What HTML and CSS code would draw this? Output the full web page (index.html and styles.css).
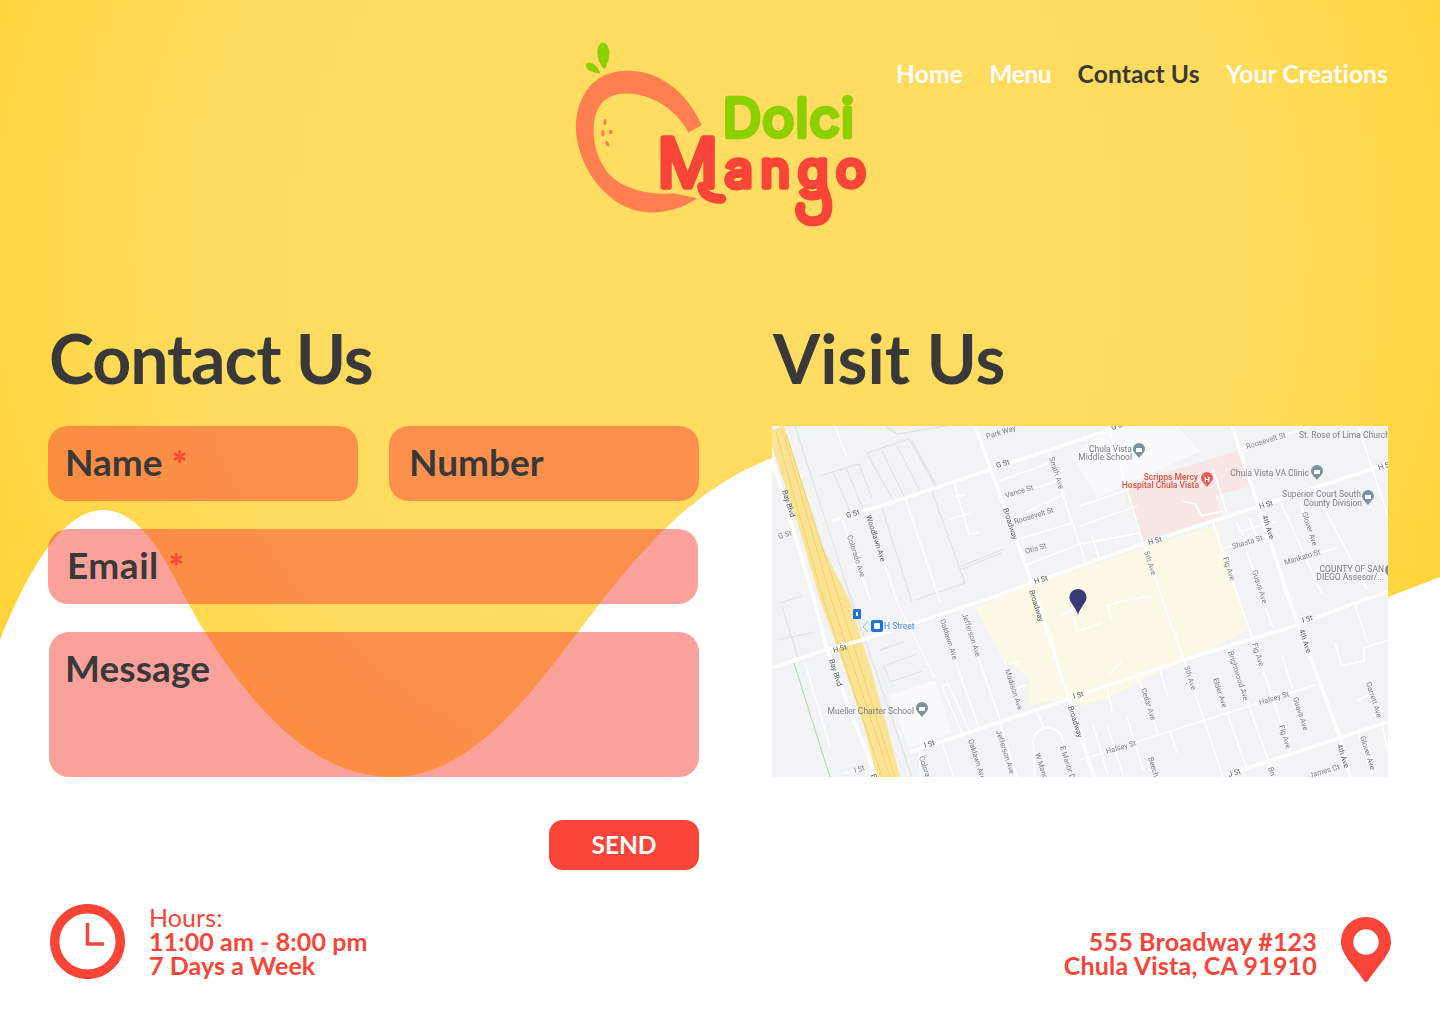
FILE: index.html
```html
<!DOCTYPE html>
<html lang="en">
<head>
<meta charset="utf-8">
<title>Dolci Mango - Contact Us</title>
<link rel="stylesheet" href="styles.css">
</head>
<body>
<svg class="backdrop" viewBox="0 0 1440 1024" aria-hidden="true">
  <defs>
    <radialGradient id="sun" gradientUnits="userSpaceOnUse" cx="720" cy="250" r="860">
      <stop offset="0" stop-color="#FFDD63"/>
      <stop offset="0.62" stop-color="#FFDC5E"/>
      <stop offset="1" stop-color="#FFD230"/>
    </radialGradient>
  </defs>
  <path fill="url(#sun)" d="M0,640 C30,565 65,510 103,510 C150,510 175,585 205,632 C260,720 320,777 393,777 C470,777 530,695 578,632 C640,550 690,490 772,458 C900,408 1000,560 1388,597 L1440,577 V0 H0 Z"/>
</svg>

<div class="page">
  <header class="header">
    <svg class="logo" viewBox="0 0 960 630" role="img" aria-label="Dolci Mango">
      <path class="logo-leaf" d="M112,68 C112,45 125,36 133,38 C145,42 152,65 146,88 C143,100 138,112 133,118 C122,105 112,88 112,68 Z"/>
      <path class="logo-leaf" d="M78,103 C84,95 97,98 106,106 C114,113 119,124 121,131 C108,130 95,127 86,120 C80,115 76,108 78,103 Z"/>
      <path class="logo-ring" d="M425,285 C395,215 330,140 240,125 C190,118 145,125 110,150 C70,178 45,240 48,300 C52,380 100,470 170,515 C230,555 320,565 412,505 L340,490 C280,495 210,485 160,445 C120,410 95,345 102,280 C106,240 125,205 165,195 C220,180 290,205 330,240 C355,262 375,285 385,308 Z"/>
      <ellipse class="logo-seed" cx="135" cy="276" rx="4.5" ry="9"/>
      <ellipse class="logo-seed" cx="129" cy="310" rx="5" ry="10"/>
      <ellipse class="logo-seed" cx="152" cy="306" rx="6" ry="7"/>
      <ellipse class="logo-seed" cx="142" cy="341" rx="5" ry="9" transform="rotate(-25 142 341)"/>
      <text class="logo-dolci" x="488" y="320" textLength="394" lengthAdjust="spacing">Dolci</text>
      <path class="logo-tail" d="M426,470 C430,495 455,508 484,506"/>
      <path class="logo-tail" d="M786,470 C815,530 805,572 762,574 C725,575 715,548 722,530"/>
      <text class="logo-mango" x="292" y="470"><tspan class="logo-m">M</tspan><tspan class="logo-ango" dx="20">ango</tspan></text>
    </svg>
    <nav class="nav">
      <a href="#">Home</a>
      <a href="#">Menu</a>
      <a href="#" class="is-current">Contact Us</a>
      <a href="#">Your Creations</a>
    </nav>
  </header>

  <main class="main">
    <section class="contact">
      <h1>Contact Us</h1>
      <form class="form">
        <div class="field field-name">Name <span class="req">*</span></div>
        <div class="field field-number">Number</div>
        <div class="field field-email">Email <span class="req">*</span></div>
        <div class="field field-message">Message</div>
        <button type="button" class="send">SEND</button>
      </form>
    </section>
    <section class="visit">
      <h1>Visit Us</h1>
      <svg class="map" viewBox="0 0 616 351" role="img" aria-label="Map of Chula Vista">
        <defs>
          <symbol id="poi" viewBox="0 0 12 15">
            <path d="M6,0 A6,6 0 0 1 12,6 C12,9.5 8,12 6,15 C4,12 0,9.5 0,6 A6,6 0 0 1 6,0 Z"/>
          </symbol>
        </defs>
        <rect class="m-bg" width="616" height="351"/>
        <polygon class="m-white" points="338,0 405,0 428,25 351,60 325,72 300,30"/>
        <polygon class="m-white" points="117,269 163,254 180,307 137,322"/>
        <polygon class="m-pink" points="351,60 465,25 478,60 443,70 450,90 371,115"/>
        <polygon class="m-cream" points="203,181 255,160 308,143 371,122 430,103 446,100 476,205 388,246 335,272 308,280 293,272 257,280 257,251 230,231"/>

        <g class="m-grey">
          <path d="M23,0 L80,176 L140,351"/>
          <path d="M8,0 L14,20"/>
          <path d="M48,50 L87,38 L100,72 M62,48 L80,90 M75,44 L93,88"/>
          <path d="M95,27 L137,13 L165,63 L122,76 Z M110,25 L132,70 M125,20 L148,65 M140,15 L165,60"/>
          <path d="M110,82 L140,176"/>
          <path d="M160,65 L193,157 L143,174"/>
          <path d="M190,140 L232,123 M190,143 L230,127"/>
          <path d="M5,214 L43,206"/>
          <path d="M8,177 L30,170 M10,180 L26,232"/>
          <path d="M108,224 L132,216 M112,240 L145,228 M118,256 L150,245 M112,240 L118,256"/>
          <path d="M113,0 L125,8 L175,0"/>
        </g>

        <polygon class="m-yellow" points="0,4 12,0 17,15 50,120 78,175 98,240 115,300 128,351 115,351 105,351 92,300 70,235 48,174 28,105 0,20"/>
        <g class="m-yellow-line">
          <path d="M4,6 L52,176 L110,351"/>
          <path d="M10,3 L60,176 L118,351"/>
          <path d="M14,8 L68,176 L123,351"/>
        </g>
        <path class="m-green" d="M22,237 L58,351"/>

        <g class="m-minor">
          <path d="M63,0 L74,30"/>
          <path d="M70,93 L98,174"/>
          <path d="M97,90 L125,176 L163,252"/>
          <path d="M133,72 L168,176"/>
          <path d="M182,57 L197,108 L206,107 M183,70 L193,69 M177,93 L200,87"/>
          <path d="M227,55 L277,37 M233,73 L290,53 M240,93 L293,68 M247,113 L300,97 M252,140 L310,117"/>
          <path d="M277,27 L315,140"/>
          <path d="M308,80 L358,63 M308,100 L365,80 M308,118 L368,107"/>
          <path d="M336,0 L371,117 L421,261 L451,351"/>
          <path d="M441,43 L455,87"/>
          <path d="M411,75 L423,78 L430,90 L451,85"/>
          <path d="M441,97 L468,176 L518,324"/>
          <path d="M450,123 L495,110"/>
          <path d="M473,120 L501,202 M510,229 L521,264"/>
          <path d="M508,75 L550,168"/>
          <path d="M528,75 L541,120"/>
          <path d="M511,137 L565,122"/>
          <path d="M551,80 L595,163"/>
          <path d="M586,0 L616,90"/>
          <path d="M471,22 L541,0"/>
          <path d="M465,97 L475,118 M477,92 L485,112 M470,105 L505,95"/>
          <path d="M455,287 L475,344"/>
          <path d="M456,221 L496,334 L505,351"/>
          <path d="M308,334 L543,259"/>
          <path d="M366,251 L386,307 M398,306 L405,327"/>
          <path d="M388,244 L396,271"/>
          <path d="M335,262 L340,286"/>
          <path d="M321,299 L336,349 M335,299 L351,349 M355,291 L371,344"/>
          <path d="M563,217 L570,240 L592,235 L592,222 L616,214"/>
          <path d="M583,179 L596,217"/>
          <path d="M586,307 L601,351"/>
          <path d="M586,274 L605,265"/>
          <path d="M610,300 L616,325"/>
          <path d="M168,191 L207,302 M190,184 L228,294"/>
          <path d="M170,261 L190,307 M177,259 L197,305 M170,261 Q172,258 177,259"/>
          <path d="M170,317 L182,351 M227,294 L245,351"/>
          <path d="M232,234 L250,286 M233,239 L248,235 M245,262 L255,259"/>
          <path d="M265,286 L272,302 M263,351 L261,315 Q262,304 275,302 Q285,302 290,310 L297,340"/>
          <path d="M33,237 L58,321"/>
          <path d="M73,347 L93,342"/>
          <path d="M147,324 L149,351"/>
          <path d="M538,349 L565,342"/>
          <path d="M336,249 L350,235 M320,110 L327,132"/>
          <path d="M288,190 L300,184 L305,205 L330,197 M340,195 L336,180 L350,175"/>
          <path d="M350,175 L380,170"/>
        </g>

        <g class="m-major">
          <path d="M60,95 L133,72 L220,43 L310,13 L350,0"/>
          <path d="M0,242 L53,224 L90,214 L213,174 L260,157 L371,118 L441,95 L488,80 L618,37"/>
          <path d="M138,326 L300,272 L411,234 L525,199 L591,174 L616,166"/>
          <path d="M455,349 L616,296"/>
          <path d="M203,0 L260,157 L322,351"/>
          <path d="M460,0 L518,176 L568,311 L578,351"/>
          <path d="M0,33 L43,176 L55,224 L100,341 L104,351"/>
        </g>

        <g class="m-label">
          <text transform="translate(215,13) rotate(-17)">Park Way</text>
          <text class="dark" transform="translate(225,42) rotate(-17)">G St</text>
          <text class="dark" transform="translate(75,92) rotate(-17)">G St</text>
          <text transform="translate(7,113) rotate(-17)">G St</text>
          <text class="dark" transform="translate(10,65) rotate(72)">Bay Blvd</text>
          <text transform="translate(277,32) rotate(72)">Smith Ave</text>
          <text class="dark" transform="translate(94,90) rotate(72)">Woodlawn Ave</text>
          <text transform="translate(75,110) rotate(72)">Colorado Ave</text>
          <text transform="translate(234,72) rotate(-17)">Vance St</text>
          <text transform="translate(243,98) rotate(-17)">Roosevelt St</text>
          <text transform="translate(254,128) rotate(-17)">Otis St</text>
          <text class="dark" transform="translate(231,83) rotate(72)">Broadway</text>
          <text class="dark" transform="translate(263,158) rotate(-17)">H St</text>
          <text class="dark" transform="translate(257,165) rotate(72)">Broadway</text>
          <text class="dark" transform="translate(340,4) rotate(-17)">G St</text>
          <text class="end poi" x="360" y="26">Chula Vista</text>
          <text class="end poi" x="360" y="34">Middle School</text>
          <text transform="translate(475,23) rotate(-17)">Roosevelt St</text>
          <text class="poi" x="527" y="12">St. Rose of Lima Church</text>
          <text class="end poi" x="537" y="50">Chula Vista VA Clinic</text>
          <text class="end poi red" x="426" y="54">Scripps Mercy</text>
          <text class="end poi red" x="427" y="62">Hospital Chula Vista</text>
          <text class="end poi" x="589" y="71">Superior Court South</text>
          <text class="end poi" x="590" y="80">County Division</text>
          <text class="dark" transform="translate(607,44) rotate(-17)">H St</text>
          <text class="dark" transform="translate(488,83) rotate(-17)">H St</text>
          <text class="dark" transform="translate(377,119) rotate(-17)">H St</text>
          <text class="dark" transform="translate(490,90) rotate(72)">4th Ave</text>
          <text transform="translate(461,123) rotate(-17)">Shasta St</text>
          <text transform="translate(451,132) rotate(72)">Fig Ave</text>
          <text transform="translate(480,145) rotate(72)">Guava Ave</text>
          <text transform="translate(530,87) rotate(72)">Glover Ave</text>
          <text transform="translate(513,139) rotate(-17)">Mankato St</text>
          <text class="end poi" x="612" y="146">COUNTY OF SAN</text>
          <text class="end poi" x="612" y="154">DIEGO Assesor/...</text>
          <text transform="translate(372,126) rotate(72)">5th Ave</text>
          <text class="dark" transform="translate(62,227) rotate(-17)">H St</text>
          <text class="blue poi" x="112" y="203">H Street</text>
          <text class="dark" transform="translate(57,234) rotate(72)">Bay Blvd</text>
          <text transform="translate(168,194) rotate(72)">Oaklawn Ave</text>
          <text transform="translate(190,188) rotate(72)">Jefferson Ave</text>
          <text transform="translate(233,244) rotate(72)">Madison Ave</text>
          <text class="end poi" x="142" y="288">Mueller Charter School</text>
          <text class="dark" transform="translate(153,322) rotate(-17)">I St</text>
          <text transform="translate(83,347) rotate(-17)">I St</text>
          <text transform="translate(147,331) rotate(72)">Colorado</text>
          <text transform="translate(196,314) rotate(72)">Oaklawn Ave</text>
          <text transform="translate(224,305) rotate(72)">Jefferson Ave</text>
          <text transform="translate(263,328) rotate(72)">W Manor</text>
          <text transform="translate(288,321) rotate(72)">E Manor D</text>
          <text class="dark" transform="translate(296,281) rotate(72)">Broadway</text>
          <text class="dark" transform="translate(302,273) rotate(-17)">I St</text>
          <text class="dark" transform="translate(99,349) rotate(72)">B</text>
          <text class="dark" transform="translate(531,197) rotate(-17)">I St</text>
          <text class="dark" transform="translate(527,204) rotate(72)">4th Ave</text>
          <text transform="translate(480,218) rotate(72)">Fig Ave</text>
          <text transform="translate(456,226) rotate(72)">Brightwood Ave</text>
          <text transform="translate(412,241) rotate(72)">5th Ave</text>
          <text transform="translate(441,253) rotate(72)">Elder Ave</text>
          <text transform="translate(369,263) rotate(72)">Cedar Ave</text>
          <text transform="translate(488,279) rotate(-17)">Halsey St</text>
          <text transform="translate(521,272) rotate(72)">Guava Ave</text>
          <text transform="translate(594,257) rotate(72)">Garrett Ave</text>
          <text transform="translate(507,300) rotate(72)">Fig Ave</text>
          <text transform="translate(335,328) rotate(-17)">Halsey St</text>
          <text transform="translate(376,332) rotate(72)">Beech</text>
          <text class="dark" transform="translate(457,351) rotate(-17)">J St</text>
          <text class="dark" transform="translate(565,319) rotate(72)">4th Ave</text>
          <text transform="translate(588,311) rotate(72)">Glover Ave</text>
          <text transform="translate(538,352) rotate(-17)">James Ct</text>
          <text transform="translate(496,342) rotate(72)">Bri</text>
        </g>

        <use href="#poi" class="m-poi" x="361" y="17" width="12" height="15"/>
        <use href="#poi" class="m-poi" x="539" y="39" width="12" height="15"/>
        <use href="#poi" class="m-poi" x="590" y="64" width="12" height="15"/>
        <use href="#poi" class="m-poi" x="144" y="276" width="12" height="15"/>
        <use href="#poi" class="m-poi" x="613" y="138" width="12" height="15"/>
        <use href="#poi" class="m-poi-red" x="429" y="46" width="12" height="15"/>
        <text class="m-glyph" x="435" y="56">H</text>
        <rect class="m-glyph-box" x="364" y="22" width="6" height="4"/>
        <rect class="m-glyph-box" x="542" y="44" width="6" height="4"/>
        <rect class="m-glyph-box" x="593" y="69" width="6" height="4"/>
        <rect class="m-glyph-box" x="147" y="281" width="6" height="4"/>

        <rect class="m-transit" x="99" y="194" width="12" height="12" rx="2"/>
        <rect class="m-transit-glyph" x="102" y="197" width="6" height="6" rx="1"/>
        <rect class="m-transit" x="81" y="183" width="8" height="10" rx="1"/>
        <rect class="m-transit-glyph" x="84" y="186" width="2" height="4"/>
        <path class="m-chevron" d="M96,195 L91,201 L96,206"/>

        <path class="m-pin" d="M306,163 C311,163 314.500,167 314.500,171.500 C314.500,177 308,181 306,189 C304,181 297.500,177 297.500,171.500 C297.500,167 301,163 306,163 Z"/>
      </svg>
    </section>
  </main>

  <footer class="footer">
    <div class="hours">
      <svg class="clock" viewBox="0 0 75 75" aria-hidden="true">
        <circle cx="37.500" cy="37.500" r="32.800"/>
        <path d="M37.500,19 V40 H54"/>
      </svg>
      <p class="hours-text"><span class="light">Hours:</span><br>11:00 am - 8:00 pm<br>7 Days a Week</p>
    </div>
    <div class="address">
      <p class="address-text">555 Broadway #123<br>Chula Vista, CA 91910</p>
      <svg class="pin" viewBox="0 0 50 65" aria-hidden="true">
        <path fill-rule="evenodd" d="M25,0 C39,0 50,11 50,25 C50,38 34,52 27,64 Q25,66 23,64 C16,52 0,38 0,25 C0,11 11,0 25,0 Z M25,12.300 A12.700,12.700 0 1 0 25,37.700 A12.700,12.700 0 1 0 25,12.300 Z"/>
      </svg>
    </div>
  </footer>
</div>
</body>
</html>
```
FILE: styles.css
```css
* { box-sizing: border-box; }
html, body { margin: 0; padding: 0; }
body {
  position: relative;
  width: 1440px;
  height: 1024px;
  overflow: hidden;
  background: #fff;
  color: #393939;
  font-family: "Lato", "Open Sans", sans-serif;
}
.backdrop {
  position: absolute;
  inset: 0;
  width: 1440px;
  height: 1024px;
}
.page { position: relative; }

.header {
  display: flex;
  height: 326px;
  padding: 30px 52px 0 560px;
  justify-content: space-between;
  align-items: flex-start;
}
.logo { width: 320px; height: 210px; flex: none; }
.logo-leaf { fill: #8CD000; }
.logo-ring { fill: #FF7F50; }
.logo-seed { fill: #FF7F50; }
.logo-dolci {
  font: 400 160px "Inter", sans-serif;
  fill: #8CD000;
  stroke: #8CD000;
  stroke-width: 14px;
  stroke-linejoin: round;
}
.logo-mango {
  font-family: "Inter", sans-serif;
  font-weight: 400;
  fill: #F94438;
  stroke: #F94438;
  stroke-width: 16px;
  stroke-linejoin: round;
}
.logo-m { font-size: 202px; }
.logo-ango { font-size: 150px; letter-spacing: 23px; }
.logo-tail {
  fill: none;
  stroke: #F94438;
  stroke-width: 30px;
  stroke-linecap: round;
}

.nav {
  display: flex;
  gap: 26.500px;
  padding-top: 29px;
  font-size: 24.600px;
  font-weight: 700;
  line-height: 30px;
}
.nav a { color: #fff; text-decoration: none; letter-spacing: 0.100px; }
.nav a:nth-child(2) { letter-spacing: -0.500px; }
.nav a.is-current { color: #393939; }

.main {
  display: grid;
  grid-template-columns: 651px 616px;
  column-gap: 73px;
  padding: 0 52px 0 48px;
}
h1 {
  margin: 0 0 20px;
  height: 80px;
  font-size: 68px;
  line-height: 64px;
  font-weight: 700;
  color: #393939;
}
.contact h1 { padding-left: 1px; letter-spacing: -1.100px; }
.visit h1 { padding-left: 1px; }

.form {
  display: grid;
  grid-template-columns: 310px 310px;
  column-gap: 31px;
  row-gap: 28px;
}
.field {
  height: 75px;
  padding: 14px 18px 0 17px;
  border-radius: 20px;
  background: rgba(247, 68, 56, 0.5);
  font-size: 37px;
  font-weight: 700;
  line-height: 44px;
  color: #393939;
}
.field-number { padding-left: 20px; }
.field-email { grid-column: 1 / -1; width: 650px; padding-left: 19px; letter-spacing: 0.500px; }
.field-message { grid-column: 1 / -1; height: 145px; margin-left: 1px; width: 650px; padding-left: 16px; letter-spacing: 0.100px; }
.req {
  color: #F94438;
  font-size: 38px;
  line-height: 0;
  vertical-align: -3px;
}
.send {
  grid-column: 2;
  justify-self: end;
  width: 150px;
  height: 50px;
  margin-top: 15px;
  padding: 0 0 2px;
  border: 0;
  border-radius: 14px;
  background: #F94438;
  color: #fff;
  font-family: inherit;
  font-size: 24.500px;
  font-weight: 700;
}

.map {
  display: block;
  width: 616px;
  height: 351px;
  filter: blur(0.35px);
}
.m-bg { fill: #F1F3F5; }
.m-white { fill: #F9FAFB; }
.m-pink { fill: #F7E6E3; }
.m-cream { fill: #FEF8E6; }
.m-yellow { fill: #FAE394; }
.m-yellow-line { fill: none; stroke: #F3D06A; stroke-width: 1; }
.m-green { fill: none; stroke: #A9D5A5; stroke-width: 1; }
.m-grey { fill: none; stroke: #DFE1E5; stroke-width: 1.2; }
.m-minor { fill: none; stroke: #fff; stroke-width: 1.8; }
.m-major { fill: none; stroke: #fff; stroke-width: 3.8; }
.m-label {
  font: 400 7.4px "Roboto", sans-serif;
  fill: #7C8086;
}
.m-label .poi { font-size: 8.500px; }
.m-label .dark { fill: #55585C; }
.m-label .end { text-anchor: end; }
.m-label .red { fill: #D9534A; font-weight: 500; }
.m-label .blue { fill: #4285F4; }
.m-poi { fill: #7B929E; }
.m-poi-red { fill: #DC6259; }
.m-glyph { font: 700 8px "Roboto", sans-serif; fill: #fff; text-anchor: middle; }
.m-glyph-box { fill: #fff; }
.m-transit { fill: #1A73E8; }
.m-transit-glyph { fill: #fff; }
.m-chevron { fill: none; stroke: #7FB98B; stroke-width: 0.8; }
.m-pin { fill: #3B3A78; }

.footer {
  display: flex;
  justify-content: space-between;
  align-items: flex-start;
  margin-top: 34px;
  padding: 0 49px 0 50px;
  color: #F94438;
  font-size: 25px;
  font-weight: 700;
  line-height: 24px;
  letter-spacing: 0.100px;
}
.hours, .address { display: flex; align-items: center; }
.hours { gap: 24px; }
.address { gap: 24px; margin-top: 13px; }
.clock { width: 75px; height: 75px; flex: none; }
.clock circle { fill: none; stroke: #F94438; stroke-width: 9.500; }
.clock path { fill: none; stroke: #F94438; stroke-width: 3.400; }
.hours-text, .address-text { margin: 0; }
.hours-text { margin-top: -2px; }
.light { font-weight: 400; }
.address-text { text-align: right; margin-top: 6px; letter-spacing: 0.200px; }
.pin { width: 50px; height: 65px; flex: none; fill: #F94438; }
```
